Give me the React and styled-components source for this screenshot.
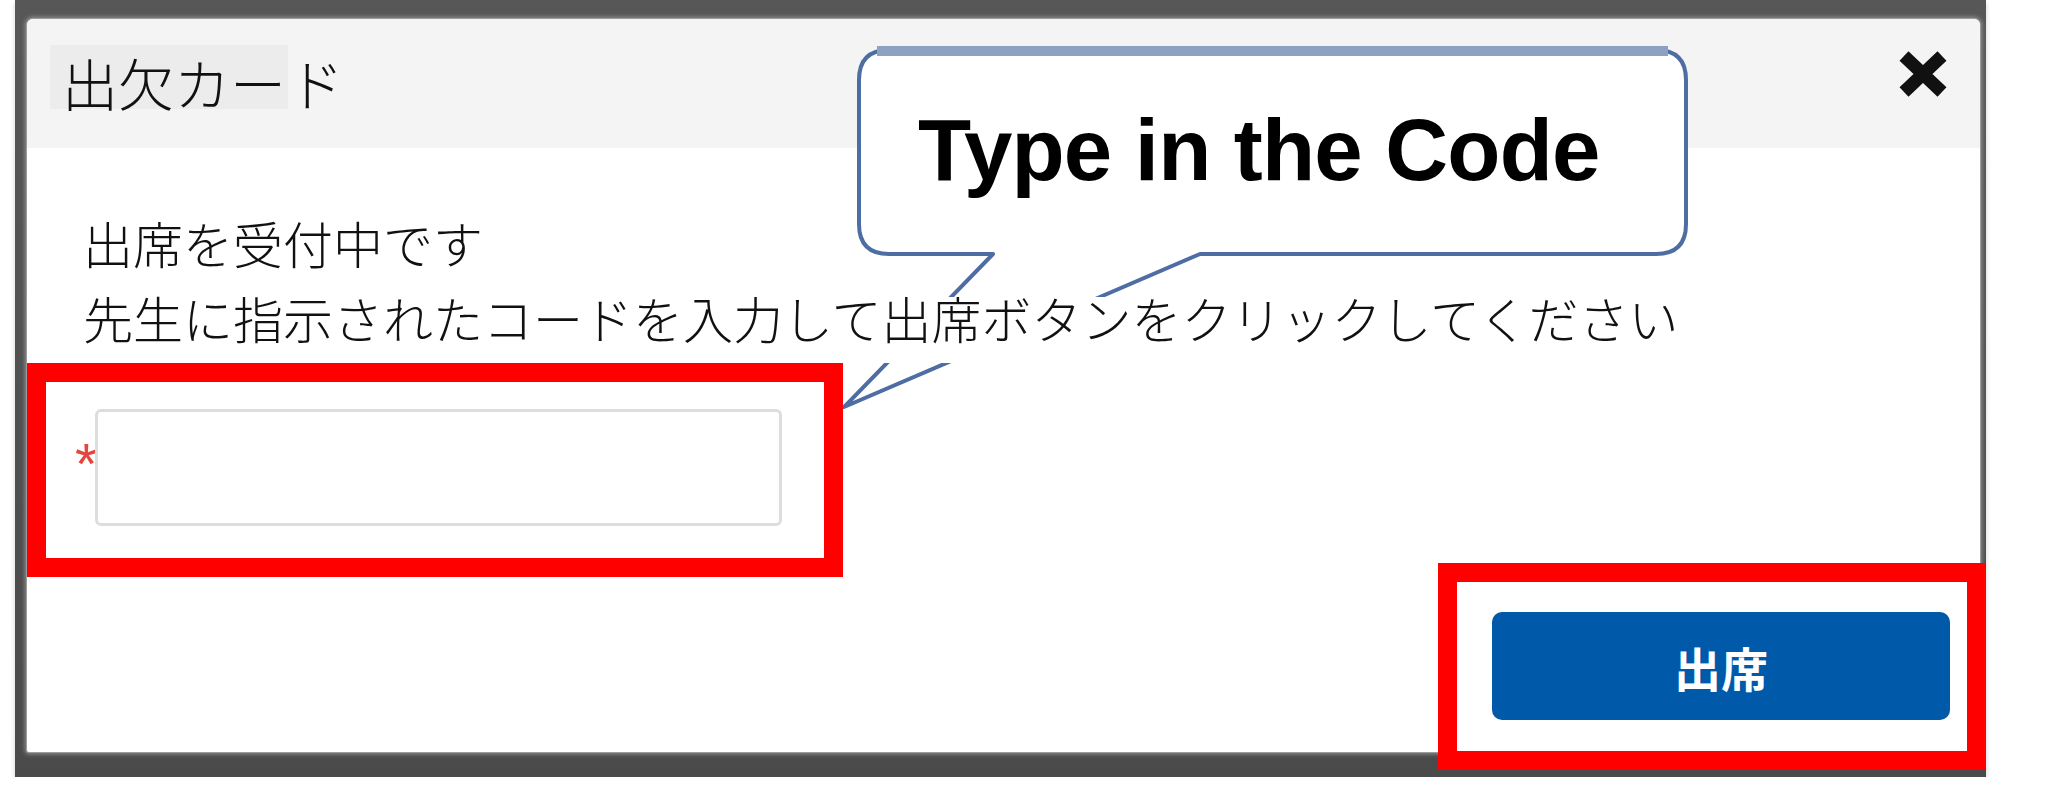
import React from 'react';
import styled, { createGlobalStyle } from 'styled-components';

const GlobalStyle = createGlobalStyle`
  html, body {
    margin: 0;
    padding: 0;
    background: #ffffff;
  }
  body {
    font-family: "Noto Sans CJK JP", "Noto Sans", sans-serif;
    color: #111111;
  }
  * {
    box-sizing: border-box;
  }
`;

const Screen = styled.div`
  width: 1971px;
  height: 777px;
  margin-left: 15px;
  padding: 19px 6px 25px 12px;
  background: linear-gradient(#575757, #4a4a4a);
  box-shadow: 0 3px 5px rgba(0, 0, 0, 0.18);
`;

const Dialog = styled.div`
  position: relative;
  display: flex;
  flex-direction: column;
  height: 733px;
  background: #ffffff;
  border-radius: 6px 6px 2px 2px;
  box-shadow: 0 0 0 1px #9b9b9b, 0 0 4px 2px rgba(160, 160, 160, 0.8);
`;

const Header = styled.header`
  display: flex;
  flex-shrink: 0;
  justify-content: space-between;
  align-items: flex-start;
  height: 129px;
  padding: 26px 32px 0 23px;
  background: #f4f4f4;
  border-radius: 6px 6px 0 0;
`;

const Title = styled.h2`
  margin: 0;
  font-size: 56px;
  font-weight: 300;
  line-height: 54px;
  color: #111111;
`;

const Selected = styled.span`
  display: inline-block;
  padding: 10px 2px 0 12px;
  line-height: 54px;
  background: #ececec;
`;

const CloseButton = styled.button`
  display: flex;
  width: 50px;
  height: 48px;
  margin-top: 5px;
  padding: 0;
  border: 0;
  background: none;
  cursor: pointer;
`;

const Body = styled.div`
  display: flex;
  flex-direction: column;
  align-items: flex-start;
  flex: 1;
  padding-top: 74px;
`;

const Line = styled.p`
  position: relative;
  z-index: 1;
  flex-shrink: 0;
  margin: 0 0 0 56px;
  padding-bottom: ${(p) => p.$gap}px;
  font-size: 50px;
  font-weight: 300;
  line-height: 40px;
  white-space: nowrap;
  background: #ffffff;
`;

const Marker = styled.div`
  display: flex;
  flex-shrink: 0;
  align-items: flex-start;
  border: 19px solid #ff0000;
`;

const FieldFrame = styled(Marker)`
  width: 816px;
  height: 214px;
  padding: 27px 0 0 29px;
`;

const Required = styled.span`
  width: 20px;
  margin-top: 26px;
  font-family: "Liberation Sans", Arial, sans-serif;
  font-size: 58px;
  line-height: 1;
  text-align: center;
  color: #e2463c;
`;

const CodeInput = styled.input`
  width: 687px;
  height: 117px;
  border: 3px solid #dddddd;
  border-radius: 6px;
  background: #ffffff;
  outline: none;
`;

const Footer = styled.div`
  display: flex;
  flex-shrink: 0;
  justify-content: flex-end;
  align-self: stretch;
  margin: -14px -6px 0 0;
`;

const ButtonFrame = styled(Marker)`
  width: 548px;
  height: 207px;
  padding: 30px 17px 31px 35px;
`;

const SubmitButton = styled.button`
  width: 458px;
  height: 108px;
  border: 0;
  border-radius: 10px;
  background: #005aa9;
  color: #ffffff;
  font-family: "Noto Sans CJK JP", sans-serif;
  font-size: 47px;
  font-weight: 700;
  cursor: pointer;
`;

const Callout = styled.div`
  position: absolute;
  left: 816px;
  top: 26px;
  width: 850px;
  height: 366px;
  padding: 61px 0 0 75px;
`;

const CalloutShape = styled.svg`
  position: absolute;
  inset: 0;
`;

const CalloutText = styled.span`
  position: relative;
  display: block;
  font-family: "Liberation Sans", Arial, sans-serif;
  font-size: 87px;
  font-weight: 700;
  line-height: 87px;
  letter-spacing: -0.8px;
  white-space: nowrap;
  color: #000000;
`;

export default function App() {
  return (
    <>
      <GlobalStyle />
      <Screen>
        <Dialog>
          <Header>
            <Title>
              <Selected>出欠カー</Selected>ド
            </Title>
            <CloseButton aria-label="閉じる">
              <svg width="50" height="48" viewBox="0 0 50 48">
                <path d="M6 6 L44 42 M44 6 L6 42" stroke="#111" strokeWidth="13" />
              </svg>
            </CloseButton>
          </Header>

          <Body>
            <Line $gap={35}>出席を受付中です</Line>
            <Line $gap={26}>先生に指示されたコードを入力して出席ボタンをクリックしてください</Line>
            <FieldFrame>
              <Required>*</Required>
              <CodeInput type="text" />
            </FieldFrame>
            <Footer>
              <ButtonFrame>
                <SubmitButton>出席</SubmitButton>
              </ButtonFrame>
            </Footer>
          </Body>

          <Callout>
            <CalloutShape width="850" height="366" viewBox="0 0 850 366">
              <path
                d="M46 5 H813 Q843 5 843 35 V179 Q843 209 813 209 H357 L1 362 L150 209 H46 Q16 209 16 179 V35 Q16 5 46 5 Z"
                fill="#ffffff"
                stroke="#4e6da3"
                strokeWidth="4"
                strokeLinejoin="round"
              />
              <path d="M34 6 H825" stroke="#8da1c2" strokeWidth="10" />
            </CalloutShape>
            <CalloutText>Type in the Code</CalloutText>
          </Callout>
        </Dialog>
      </Screen>
    </>
  );
}
